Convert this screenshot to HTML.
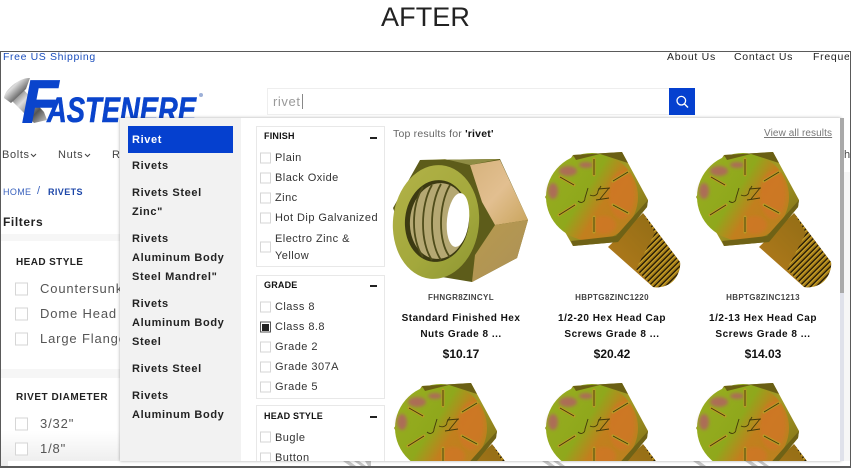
<!DOCTYPE html>
<html><head><meta charset="utf-8">
<style>
*{box-sizing:border-box;margin:0;padding:0}
html,body{width:851px;height:468px;overflow:hidden;background:#fff;font-family:"Liberation Sans",sans-serif}
.t{position:absolute;white-space:nowrap;line-height:14px;transform:translateY(-6px)}
.c{transform:translate(-50%,-6px);text-align:center}
.box{position:absolute;width:11px;height:11px;border:1px solid #d6d6d6;background:#fff;transform:translateY(-5.5px)}
.f{font-size:11px;letter-spacing:.46px;color:#333}
.l{font-size:11px;letter-spacing:.62px;color:#222;font-weight:bold}
.h{font-size:9px;font-weight:bold;color:#111;letter-spacing:.2px}
.panel{position:absolute;left:256px;width:129px;border:1px solid #e8e8e8;background:#fff}
.minus{position:absolute;left:370px;width:7px;height:1.5px;background:#222}
.s{font-size:8px;font-weight:bold;letter-spacing:.35px;color:#444}
.n{font-size:10px;font-weight:bold;letter-spacing:.5px;color:#111}
.p{font-size:12px;font-weight:bold;letter-spacing:0;color:#111;transform:translate(-50%,-7px)}
.sb{position:absolute;border:1px solid #d6d6d6;width:13px;height:13px;background:#fff;transform:translateY(-6.5px)}
.sf{font-size:13px;letter-spacing:.85px;color:#555}
</style></head><body>
<div style="position:absolute;left:381px;top:3px;font-size:27px;line-height:28px;color:#222;white-space:nowrap;letter-spacing:.1px">AFTER</div>

<div style="position:absolute;left:0;top:51px;width:851px;height:417px;border-style:solid;border-color:#5a5a5a;border-width:1px 1px 2px 1px;background:#fff"></div>

<!-- page background -->
<div style="position:absolute;left:1px;top:172px;width:849px;height:294px;background:#f6f6f6"></div>
<div style="position:absolute;left:1px;top:172px;width:240px;height:62px;background:#fff"></div>
<div style="position:absolute;left:1px;top:241px;width:240px;height:128px;background:#fff"></div>
<div style="position:absolute;left:1px;top:378px;width:240px;height:88px;background:linear-gradient(#fff 60%,#ececec)"></div>
<div style="position:absolute;left:8px;top:461px;width:842px;height:5px;background:#fff"></div>
<svg style="position:absolute;left:0;top:461px" width="851" height="5"><g fill="#c6c6c6"><path d="M343 0h6l7 5h-6zM354 0h5l7 5h-5zM365 0h6v5h-3zM542 0h6l7 5h-6zM553 0h5l7 5h-5zM693 0h6l7 5h-6zM745 0h6l7 5h-6zM757 0h5l7 5h-5z"/></g></svg>

<div class="t" style="left:3px;top:56px;font-size:10.5px;letter-spacing:.62px;color:#1c4fbd">Free US Shipping</div>
<div class="t" style="left:667px;top:56px;font-size:10.5px;letter-spacing:.72px;color:#222">About Us</div>
<div class="t" style="left:734px;top:56px;font-size:10.5px;letter-spacing:.72px;color:#222">Contact Us</div>
<div style="position:absolute;left:813px;top:50px;width:36px;height:14px;overflow:hidden"><div class="t" style="left:0;top:6px;font-size:10.5px;letter-spacing:.72px;color:#222">Frequently</div></div>

<!-- logo -->
<svg style="position:absolute;left:0;top:70px" width="215" height="60">
<defs>
<linearGradient id="lg" x1="0" y1="0" x2="1" y2="1"><stop offset="0" stop-color="#3d3d3d"/><stop offset=".35" stop-color="#ddd"/><stop offset=".7" stop-color="#555"/><stop offset="1" stop-color="#ccc"/></linearGradient>
</defs>
<path d="M22 18L44 42L47 50L34 53L12 31Z" fill="url(#lg)"/>
<path d="M4 28C4 20 20 7 30 8L26 19L11 33Z" fill="url(#lg)"/>
<text x="22" y="52" font-family="Liberation Sans" font-weight="bold" font-style="italic" font-size="60" fill="#0a44cc" stroke="#0a44cc" stroke-width="1.400" textLength="36" lengthAdjust="spacingAndGlyphs">F</text>
<text x="47" y="52" font-family="Liberation Sans" font-weight="bold" font-style="italic" font-size="35" fill="#0a44cc" stroke="#0a44cc" stroke-width=".6" textLength="149" lengthAdjust="spacingAndGlyphs">ASTENERE</text>
<circle cx="201" cy="25" r="2" fill="#9db0d8"/>
</svg>

<!-- search -->
<div style="position:absolute;left:267px;top:88px;width:403px;height:27px;border:1px solid #eee;background:#fff"></div>
<div class="t" style="left:273px;top:101px;font-size:13px;letter-spacing:.6px;color:#999">rivet</div>
<div style="position:absolute;left:302px;top:94px;width:1px;height:15px;background:#888"></div>
<div style="position:absolute;left:669px;top:88px;width:26px;height:27px;background:#0540cf"></div>
<svg style="position:absolute;left:669px;top:88px" width="26" height="27"><circle cx="12.3" cy="12.7" r="4.3" fill="none" stroke="#fff" stroke-width="1.3"/><path d="M15.5 16l3.500 3.500" stroke="#fff" stroke-width="1.400"/></svg>

<!-- nav -->
<div class="t" style="left:2px;top:154px;font-size:11px;letter-spacing:.65px;color:#444">Bolts</div>
<div class="t" style="left:58px;top:154px;font-size:11px;letter-spacing:.65px;color:#444">Nuts</div>
<div class="t" style="left:112px;top:154px;font-size:11px;color:#444">R</div>
<svg style="position:absolute;left:30px;top:152px" width="62" height="8"><path d="M1 2l2.500 2.500L6 2M55 2l2.500 2.500L60 2" fill="none" stroke="#444" stroke-width="1"/></svg>
<div style="position:absolute;left:844px;top:148px;width:6px;height:14px;overflow:hidden"><div class="t" style="left:0;top:6px;font-size:11px;color:#444">h</div></div>

<!-- left page -->
<div class="t" style="left:3px;top:191px;font-size:9px;letter-spacing:.35px;color:#3a62bd">HOME</div>
<div class="t" style="left:37px;top:190px;font-size:11px;color:#3a62bd">/</div>
<div class="t" style="left:48px;top:191px;font-size:9px;font-weight:bold;letter-spacing:.4px;color:#1c46a8">RIVETS</div>
<div class="t" style="left:3px;top:221px;font-size:12px;font-weight:bold;letter-spacing:.6px;color:#222">Filters</div>
<div class="t" style="left:16px;top:262px;font-size:10px;font-weight:bold;letter-spacing:.4px;color:#222">HEAD STYLE</div>
<div class="sb" style="left:15px;top:289px"></div><div class="t sf" style="left:40px;top:288px">Countersunk</div>
<div class="sb" style="left:15px;top:314px"></div><div class="t sf" style="left:40px;top:313px">Dome Head</div>
<div class="sb" style="left:15px;top:339px"></div><div class="t sf" style="left:40px;top:338px">Large Flange</div>
<div class="t" style="left:16px;top:397px;font-size:10px;font-weight:bold;letter-spacing:.55px;color:#222">RIVET DIAMETER</div>
<div class="sb" style="left:15px;top:424px"></div><div class="t sf" style="left:40px;top:423px">3/32"</div>
<div class="sb" style="left:15px;top:449px"></div><div class="t sf" style="left:40px;top:448px">1/8"</div>

<!-- popup -->
<div style="position:absolute;left:120px;top:118px;width:721px;height:343px;background:#fff;box-shadow:0 0 3px rgba(0,0,0,.35)"></div>
<div style="position:absolute;left:120px;top:118px;width:121px;height:343px;background:#f2f2f2"></div>
<div style="position:absolute;left:840px;top:118px;width:4px;height:343px;background:#dfe1ea"></div>
<div style="position:absolute;left:840px;top:118px;width:4px;height:175px;background:#a9a9a9"></div>
<div style="position:absolute;left:128px;top:126px;width:105px;height:27px;background:#0540cf"></div>
<div class="t l" style="left:132px;top:139px;color:#fff">Rivet</div>
<div class="t l" style="left:132px;top:165px">Rivets</div>
<div class="t l" style="left:132px;top:192px">Rivets Steel</div>
<div class="t l" style="left:132px;top:211px">Zinc"</div>
<div class="t l" style="left:132px;top:238px">Rivets</div>
<div class="t l" style="left:132px;top:257px">Aluminum Body</div>
<div class="t l" style="left:132px;top:276px">Steel Mandrel"</div>
<div class="t l" style="left:132px;top:303px">Rivets</div>
<div class="t l" style="left:132px;top:322px">Aluminum Body</div>
<div class="t l" style="left:132px;top:341px">Steel</div>
<div class="t l" style="left:132px;top:368px">Rivets Steel</div>
<div class="t l" style="left:132px;top:395px">Rivets</div>
<div class="t l" style="left:132px;top:414px">Aluminum Body</div>

<!-- filters -->
<div class="panel" style="top:126px;height:141px"></div>
<div class="panel" style="top:275px;height:124px"></div>
<div class="panel" style="top:405px;height:56px;border-bottom:0"></div>
<div class="t h" style="left:264px;top:135px">FINISH</div><div class="minus" style="top:137px"></div>
<div class="box" style="left:260px;top:158px"></div><div class="t f" style="left:275px;top:157px">Plain</div>
<div class="box" style="left:260px;top:178px"></div><div class="t f" style="left:275px;top:177px">Black Oxide</div>
<div class="box" style="left:260px;top:198px"></div><div class="t f" style="left:275px;top:197px">Zinc</div>
<div class="box" style="left:260px;top:218px"></div><div class="t f" style="left:275px;top:217px">Hot Dip Galvanized</div>
<div class="box" style="left:260px;top:247px"></div><div class="t f" style="left:275px;top:238px">Electro Zinc &amp;</div><div class="t f" style="left:275px;top:255px">Yellow</div>
<div class="t h" style="left:264px;top:284px">GRADE</div><div class="minus" style="top:285px"></div>
<div class="box" style="left:260px;top:307px"></div><div class="t f" style="left:275px;top:306px">Class 8</div>
<div class="box" style="left:260px;top:327px;border-color:#555"></div><div style="position:absolute;left:262px;top:323.500px;width:7px;height:7px;background:#222"></div><div class="t f" style="left:275px;top:326px">Class 8.8</div>
<div class="box" style="left:260px;top:347px"></div><div class="t f" style="left:275px;top:346px">Grade 2</div>
<div class="box" style="left:260px;top:367px"></div><div class="t f" style="left:275px;top:366px">Grade 307A</div>
<div class="box" style="left:260px;top:387px"></div><div class="t f" style="left:275px;top:386px">Grade 5</div>
<div class="t h" style="left:264px;top:415px">HEAD STYLE</div><div class="minus" style="top:416px"></div>
<div class="box" style="left:260px;top:437px"></div><div class="t f" style="left:275px;top:437px">Bugle</div>
<div style="position:absolute;left:250px;top:450px;width:135px;height:11px;overflow:hidden"><div class="box" style="left:10px;top:8px"></div><div class="t f" style="left:25px;top:7px">Button</div></div>

<!-- results header -->
<div class="t" style="left:393px;top:133px;font-size:10.5px;letter-spacing:.2px;color:#666">Top results for <b style="color:#111">'rivet'</b></div>
<div class="t" style="left:764px;top:133px;font-size:10px;letter-spacing:.1px;color:#777;text-decoration:underline">View all results</div>

<!-- products -->
<svg style="position:absolute;left:385px;top:125px" width="455" height="336" viewBox="385 125 455 336">
<defs>
<linearGradient id="hd" x1="0" y1=".2" x2="1" y2=".8"><stop offset="0" stop-color="#98ad20"/><stop offset=".42" stop-color="#8fa81c"/><stop offset=".62" stop-color="#c27f1e"/><stop offset="1" stop-color="#b9821f"/></linearGradient>
<linearGradient id="hx" x1="0" y1="0" x2="1" y2="1"><stop offset="0" stop-color="#8b8a22"/><stop offset=".5" stop-color="#a39a24"/><stop offset="1" stop-color="#7a6414"/></linearGradient>
<linearGradient id="sh" x1="0" y1="1" x2="1" y2="0"><stop offset="0" stop-color="#b67c1c"/><stop offset="1" stop-color="#8a6a14"/></linearGradient>
<pattern id="th" width="4" height="4" patternUnits="userSpaceOnUse" patternTransform="rotate(45)"><rect width="4" height="4" fill="#a37a18"/><rect width="1.400" height="4" fill="#1e1606"/><rect x="1.400" width="1" height="4" fill="#d3ac2c"/></pattern>
<linearGradient id="nf" x1="0" y1="0" x2="1" y2="1"><stop offset="0" stop-color="#b2b247"/><stop offset=".6" stop-color="#a3a83c"/><stop offset="1" stop-color="#8e9632"/></linearGradient>
<linearGradient id="np" x1="0" y1="0" x2="1" y2="1"><stop offset="0" stop-color="#d6b27c"/><stop offset=".5" stop-color="#e2bf90"/><stop offset="1" stop-color="#c9a45c"/></linearGradient>
<linearGradient id="nb" x1="0" y1="0" x2="1" y2="1"><stop offset="0" stop-color="#b89a4e"/><stop offset="1" stop-color="#ac9158"/></linearGradient>
<filter id="bl"><feGaussianBlur stdDeviation="1.500"/></filter>
<g id="bolt">
<path d="M103 68L140 117C141 124 137 133 132 137C126 142 118 143 113 142L68 102Z" fill="url(#sh)"/>
<path d="M103 68L140 117C141 124 137 133 132 137C126 142 118 143 113 142L96 124L115 88Z" fill="url(#th)"/>
<path d="M33 10L82 7L108 55L107 62L78 97L33 101L5 52Z" fill="url(#hx)"/>
<ellipse cx="52" cy="52" rx="46" ry="44" fill="url(#hd)"/>
<path d="M108 55L107 62L78 97L33 101L31 96L76 91Z" fill="#6f6216"/>
<path d="M33 10L82 7L88 18L60 9L36 15Z" fill="#6a5f14"/>
<g filter="url(#bl)"><g fill="#b5586a" opacity=".75"><ellipse cx="28" cy="26" rx="9" ry="5"/><ellipse cx="13" cy="46" rx="5" ry="8"/><ellipse cx="46" cy="20" rx="7" ry="3"/></g>
<g fill="#d8722a" opacity=".55"><ellipse cx="82" cy="50" rx="13" ry="24"/><ellipse cx="64" cy="80" rx="12" ry="9"/></g></g>
<g stroke="#b79a25" stroke-width="3" stroke-linecap="round"><path d="M54 14V30M20 32L34 40M73 36L88 27M19 70L35 60M73 60L88 68M54 72V87"/></g>
<g stroke="#42390a" stroke-width=".9" fill="none"><path d="M54 14V30M20 32L34 40M73 36L88 27M19 70L35 60M73 60L88 68M54 72V87"/><path d="M38 56c3 3 7 1 7-3l3-10M50 50c4 2 8 0 8-4l3-5M60 54l9-11M58 44l12 -1M56 55l13-2"/></g>
</g>
</defs>
<!-- nut -->
<g transform="translate(385 145)">
<path d="M35 15L115 14L143 75L132 113L87 137L33 128L8 63Z" fill="#5d5c1a"/>
<path d="M85 20L115 15L143 75L110 80L97 57Z" fill="url(#np)"/>
<path d="M110 80L143 75L132 113L87 137L90 110Z" fill="url(#nb)"/>
<path d="M35 15L115 14L85 20L60 14Z" fill="#8e8c44"/>
<ellipse cx="51" cy="77" rx="43" ry="57" transform="rotate(6 51 77)" fill="url(#nf)"/>
<ellipse cx="52" cy="76" rx="32" ry="41" transform="rotate(6 52 76)" fill="#3c3a12"/>
<ellipse cx="54" cy="76" rx="29" ry="38" transform="rotate(6 54 76)" fill="#b5a873"/>
<g fill="none" stroke="#4f4c1a" stroke-width="1.800"><path d="M38 42C26 60 26 95 38 112M47 40C35 60 35 98 47 115M56 39C44 60 44 98 56 115M65 40C53 60 53 98 65 112"/></g>
<ellipse cx="73" cy="75" rx="11" ry="27" transform="rotate(6 73 75)" fill="#fff"/>
</g>
<use href="#bolt" transform="translate(540 145)"/>
<use href="#bolt" transform="translate(691 145)"/>
<use href="#bolt" transform="translate(389 376)"/>
<use href="#bolt" transform="translate(540 376)"/>
<use href="#bolt" transform="translate(691 376)"/>
</svg>

<div class="t c s" style="left:461px;top:297px">FHNGR8ZINCYL</div>
<div class="t c s" style="left:612px;top:297px">HBPTG8ZINC1220</div>
<div class="t c s" style="left:763px;top:297px">HBPTG8ZINC1213</div>
<div class="t c n" style="left:461px;top:318px">Standard Finished Hex</div>
<div class="t c n" style="left:461px;top:334px">Nuts Grade 8 ...</div>
<div class="t c n" style="left:612px;top:318px">1/2-20 Hex Head Cap</div>
<div class="t c n" style="left:612px;top:334px">Screws Grade 8 ...</div>
<div class="t c n" style="left:763px;top:318px">1/2-13 Hex Head Cap</div>
<div class="t c n" style="left:763px;top:334px">Screws Grade 8 ...</div>
<div class="t c p" style="left:461px;top:354px">$10.17</div>
<div class="t c p" style="left:612px;top:354px">$20.42</div>
<div class="t c p" style="left:763px;top:354px">$14.03</div>
</body></html>
